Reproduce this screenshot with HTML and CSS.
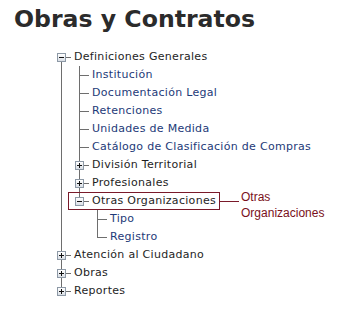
FILE: index.html
```html
<!DOCTYPE html>
<html lang="es">
<head>
    <meta charset="UTF-8">
    <title>Obras y Contratos</title>
    <link rel="stylesheet" href="styles.css">
</head>
<body>

    <h1 class="title">Obras y Contratos</h1>

    <!-- Arbol del menu -->
    <ul class="tree">
        <li>
            <div class="row"><span class="toggle minus"></span><span class="dash"></span><span class="label">Definiciones Generales</span></div>
            <ul>
                <li><div class="row"><span class="leaf"></span><a class="label link">Institución</a></div></li>
                <li><div class="row"><span class="leaf"></span><a class="label link">Documentación Legal</a></div></li>
                <li><div class="row"><span class="leaf"></span><a class="label link">Retenciones</a></div></li>
                <li><div class="row"><span class="leaf"></span><a class="label link">Unidades de Medida</a></div></li>
                <li><div class="row"><span class="leaf"></span><a class="label link">Catálogo de Clasificación de Compras</a></div></li>
                <li><div class="row"><span class="toggle plus"></span><span class="dash"></span><span class="label">División Territorial</span></div></li>
                <li><div class="row"><span class="toggle plus"></span><span class="dash"></span><span class="label">Profesionales</span></div></li>
                <li>
                    <div class="row marked">
                        <span class="toggle minus"></span><span class="dash"></span><span class="label">Otras Organizaciones</span>
                        <div class="callout"><span class="callout-line"></span><span class="callout-text">Otras<br>Organizaciones</span></div>
                    </div>
                    <ul>
                        <li><div class="row"><span class="leaf"></span><a class="label link">Tipo</a></div></li>
                        <li><div class="row"><span class="leaf"></span><a class="label link">Registro</a></div></li>
                    </ul>
                </li>
            </ul>
        </li>
        <li><div class="row"><span class="toggle plus"></span><span class="dash"></span><span class="label">Atención al Ciudadano</span></div></li>
        <li><div class="row"><span class="toggle plus"></span><span class="dash"></span><span class="label">Obras</span></div></li>
        <li><div class="row"><span class="toggle plus"></span><span class="dash"></span><span class="label">Reportes</span></div></li>
    </ul>

</body>
</html>
```

FILE: styles.css
```css
* {
    margin: 0;
    padding: 0;
    box-sizing: border-box;
}

body {
    background-color: #fff;
    font-family: 'DejaVu Sans', sans-serif;
    color: #222;
}

/* Titulo */
.title {
    margin: 5px 0 0 14px;
    font-size: 23.6px;
    line-height: 28px;
    font-weight: bold;
    color: #2b2b2b;
}

/* Arbol */
.tree,
.tree ul {
    list-style: none;
}

.tree {
    margin-top: 15px;
    padding-left: 57px;
}

.tree ul {
    padding-left: 18px;
}

.tree li {
    position: relative;
}

.tree li::before {
    content: "";
    position: absolute;
    left: 4px;
    top: 0;
    bottom: 0;
    border-left: 1px solid #6e6e6e;
}

.tree li:last-child::before {
    bottom: auto;
    height: 9px;
}

.tree > li:first-child::before {
    top: 9px;
}

.row {
    display: flex;
    width: max-content;
    align-items: center;
    height: 18px;
    position: relative;
}

.toggle {
    width: 9px;
    height: 9px;
    border: 1px solid #8d99a6;
    background: linear-gradient(#ffffff, #d9dee5);
    position: relative;
    z-index: 1;
    flex: none;
}

.toggle::before {
    content: "";
    position: absolute;
    left: 1px;
    top: 3px;
    width: 5px;
    height: 1px;
    background-color: #111;
}

.toggle.plus::after {
    content: "";
    position: absolute;
    left: 3px;
    top: 1px;
    width: 1px;
    height: 5px;
    background-color: #111;
}

.dash {
    width: 5px;
    border-top: 1px solid #6e6e6e;
}

.leaf {
    width: 10px;
    margin-left: 4px;
    border-top: 1px solid #6e6e6e;
}

.label {
    margin-left: 3px;
    font-size: 11px;
    line-height: 18px;
    letter-spacing: 0.3px;
    white-space: nowrap;
    color: #1e1e1e;
}

.link {
    color: #1d3a78;
    text-decoration: none;
}

/* Marca y nota */
.marked::before {
    content: "";
    position: absolute;
    left: -7px;
    right: -4px;
    top: 0;
    bottom: 0;
    border: 1px solid #7a1a2a;
}

.callout {
    position: absolute;
    left: calc(100% + 3px);
    top: -3px;
    display: flex;
    align-items: flex-start;
}

.callout-line {
    width: 20px;
    margin-top: 12px;
    border-top: 1px solid #7a1a2a;
}

.callout-text {
    margin-left: 2px;
    font-family: 'Liberation Sans', Arial, sans-serif;
    font-size: 12px;
    line-height: 16px;
    color: #7a1020;
    white-space: nowrap;
}
```
